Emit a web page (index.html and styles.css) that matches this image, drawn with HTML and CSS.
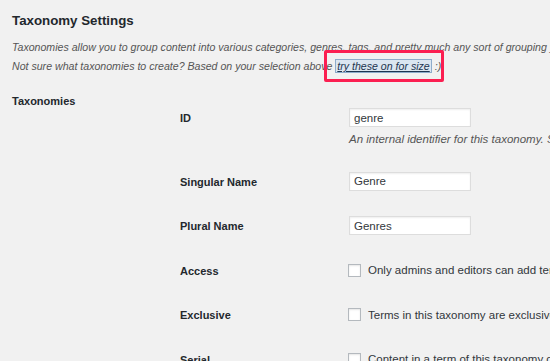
FILE: index.html
```html
<!DOCTYPE html>
<html lang="en">

<head>
    <meta charset="UTF-8">
    <meta name="viewport" content="width=device-width, initial-scale=1.0">
    <title>Taxonomy Settings</title>
    <link rel="stylesheet" href="styles.css">
</head>

<body>
    <div class="wrap">
        <h2 class="title">Taxonomy Settings</h2>
        <p class="intro">
            Taxonomies allow you to group content into various categories, genres, tags, and pretty much any sort of grouping you can imagine.<br>
            Not sure what taxonomies to create? Based on your selection above <span class="hint"><a href="#" class="hint-link">try these on for size</a> :)<span class="mark"></span></span>
        </p>

        <div class="section">
            <div class="section-title">Taxonomies</div>
            <div class="fields">
                <div class="row">
                    <label class="label">ID</label>
                    <div class="field">
                        <input class="text" type="text" value="genre">
                        <p class="note">An internal identifier for this taxonomy. Should only contain lowercase letters.</p>
                    </div>
                </div>
                <div class="row">
                    <label class="label">Singular Name</label>
                    <div class="field">
                        <input class="text" type="text" value="Genre">
                    </div>
                </div>
                <div class="row">
                    <label class="label">Plural Name</label>
                    <div class="field">
                        <input class="text" type="text" value="Genres">
                    </div>
                </div>
                <div class="row">
                    <label class="label">Access</label>
                    <div class="field check">
                        <input type="checkbox">
                        <span>Only admins and editors can add terms to this taxonomy.</span>
                    </div>
                </div>
                <div class="row">
                    <label class="label">Exclusive</label>
                    <div class="field check">
                        <input type="checkbox">
                        <span>Terms in this taxonomy are exclusive of each other.</span>
                    </div>
                </div>
                <div class="row">
                    <label class="label">Serial</label>
                    <div class="field check">
                        <input type="checkbox">
                        <span>Content in a term of this taxonomy can be ordered.</span>
                    </div>
                </div>
            </div>
        </div>
    </div>
</body>

</html>
```

FILE: styles.css
```css
body {
    margin: 0;
    background: #f1f1f1;
    color: #23282d;
    font-family: "Liberation Sans", Arial, sans-serif;
    overflow: hidden;
}

.wrap {
    padding: 11px 0 0 12px;
    white-space: nowrap;
}

.title {
    margin: 0;
    font-size: 13.3px;
    line-height: 20px;
    font-weight: bold;
}

.intro {
    margin: 7px 0 0;
    font-size: 10.6px;
    line-height: 19px;
    font-style: italic;
    color: #555;
}

.hint {
    position: relative;
}

.hint-link {
    color: #1d3550;
    background: #dbe6f1;
    border: 1px solid #8eaccb;
    padding: 0 1px;
}

.mark {
    position: absolute;
    left: -11px;
    right: -3px;
    top: -10px;
    bottom: -10px;
    border: 3px solid #fb1f51;
    border-radius: 2px;
}

.section {
    margin-top: 16px;
    display: grid;
    grid-template-columns: 168px 1fr;
}

.section-title,
.label {
    font-size: 11px;
    font-weight: bold;
    line-height: 19px;
}

.fields {
    padding-top: 3px;
}

.row {
    display: grid;
    grid-template-columns: 169px 1fr;
    padding: 13px 0 12.5px;
}

.label {
    padding-top: 1px;
    line-height: 18px;
}

.text {
    display: block;
    box-sizing: border-box;
    width: 122px;
    height: 19px;
    margin: 0;
    padding: 0 4px;
    border: 1px solid #ddd;
    background: #fff;
    box-shadow: inset 0 1px 2px rgba(0, 0, 0, .07);
    font-family: "Liberation Sans", Arial, sans-serif;
    font-size: 11.5px;
    color: #32373c;
}

.note {
    margin: 5px 0 0;
    font-size: 11.5px;
    line-height: 14px;
    font-style: italic;
    color: #555;
}

.check {
    display: flex;
    align-items: center;
    gap: 7px;
    height: 19px;
    font-size: 11.5px;
    color: #32373c;
}

.check input {
    appearance: none;
    width: 13px;
    height: 13px;
    margin: 0 0 0 -1px;
    border: 1px solid #b4b9be;
    background: #fff;
    box-shadow: inset 0 1px 2px rgba(0, 0, 0, .1);
}
```
